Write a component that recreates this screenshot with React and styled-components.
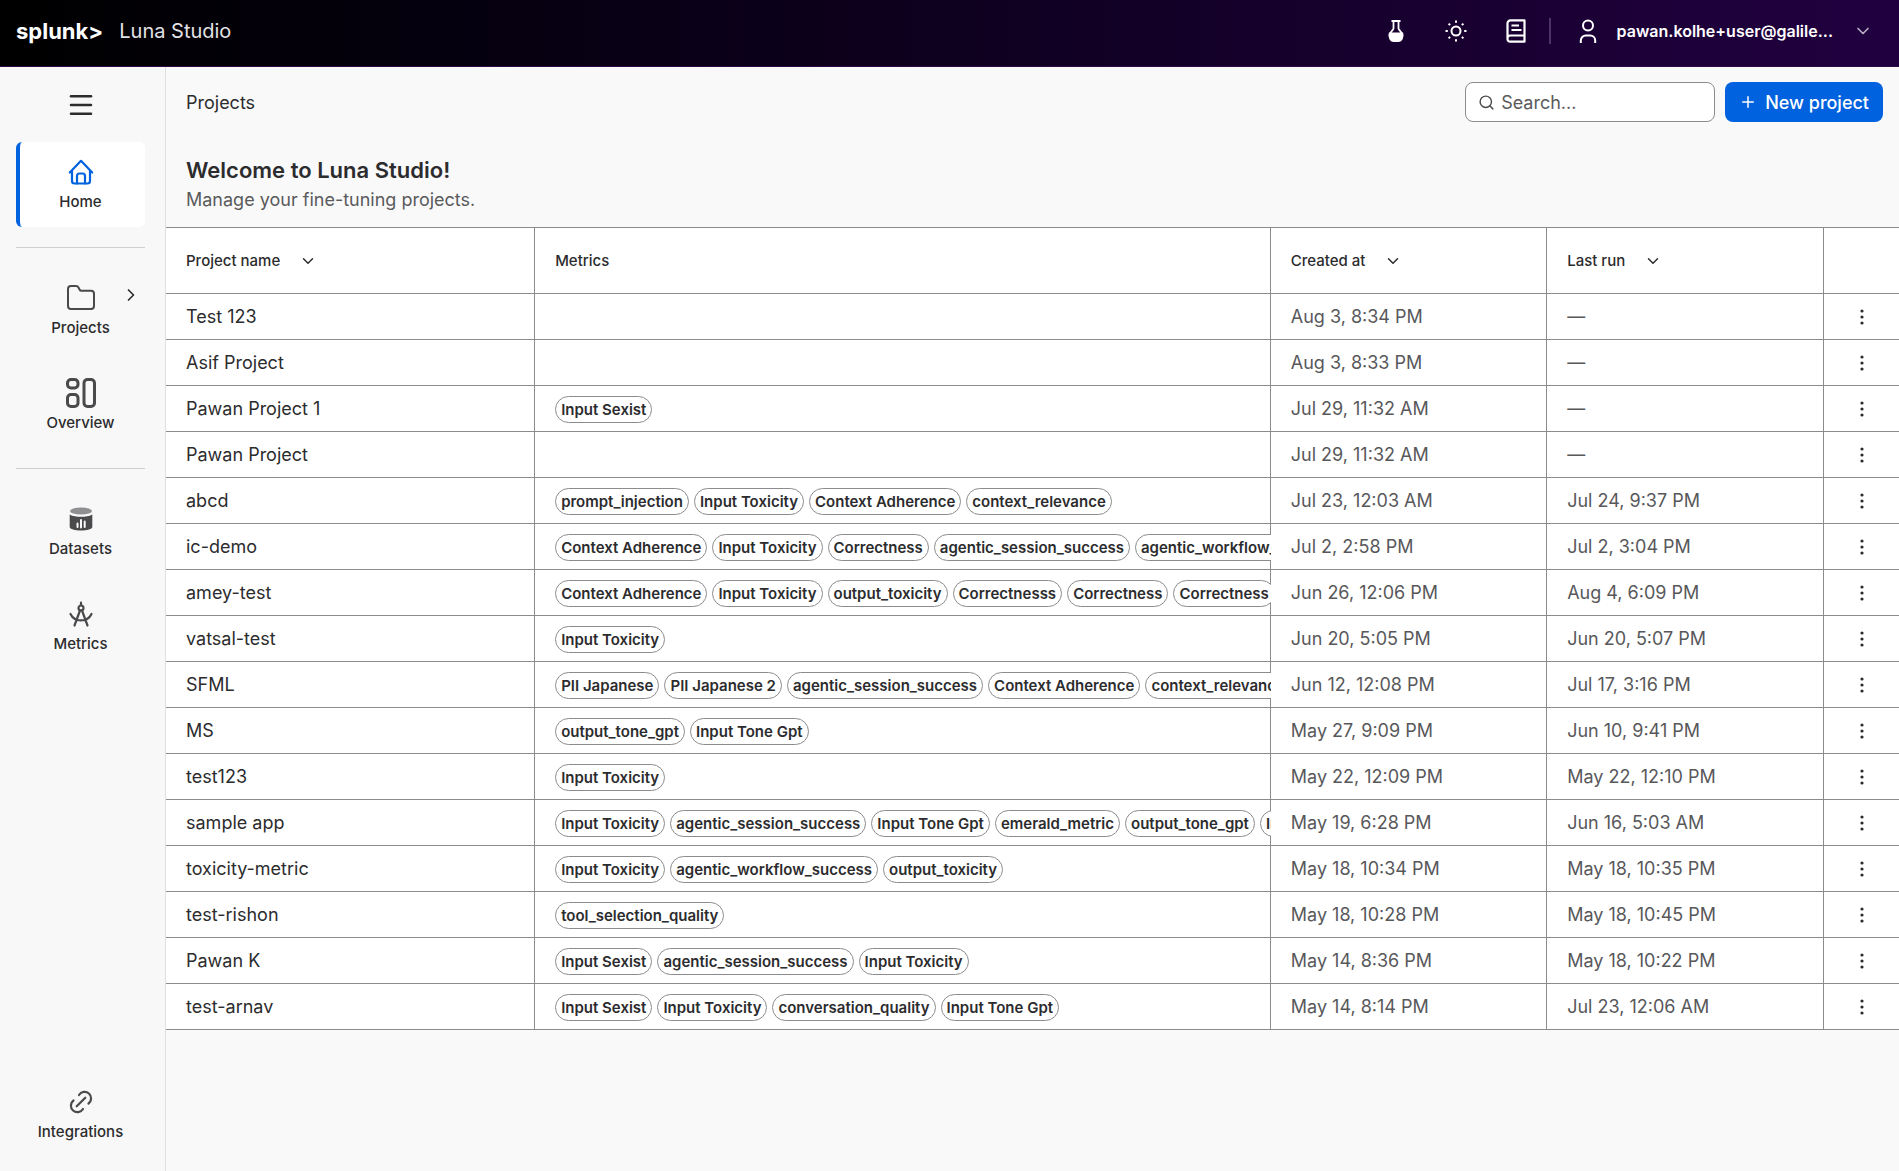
import styled, { createGlobalStyle } from "styled-components";
import { ChevronDown, ChevronRight, Menu, Plus, Search } from "lucide-react";

const GlobalStyle = createGlobalStyle`
    * {
        box-sizing: border-box;
    }

    body {
        margin: 0;
        background: #f9f9f9;
        color: #2c2c2e;
        font-family: Inter, "Liberation Sans", sans-serif;
        font-size: 18px;
    }

    button,
    input {
        font-family: inherit;
    }

    h1,
    h2,
    p,
    ul {
        margin: 0;
        padding: 0;
    }
`;

const Page = styled.div`
    min-height: 100vh;
    display: flex;
    flex-direction: column;
`;

const TopBar = styled.header`
    display: flex;
    align-items: center;
    justify-content: space-between;
    height: 67px;
    padding: 0 16px;
    background: linear-gradient(90deg, #000000 0%, #05000f 25%, #210040 100%);
    border-bottom: 1px solid #2f0a45;
    color: #ffffff;
`;

const Brand = styled.a`
    display: flex;
    align-items: center;
    gap: 16px;
    padding-bottom: 4px;
    color: #e2e2e6;
    font-size: 20px;
    line-height: 28px;
    text-decoration: none;

    strong {
        color: #ffffff;
        font-size: 22px;
        font-weight: 700;
    }
`;

const TopActions = styled.div`
    display: flex;
    align-items: center;
    padding-bottom: 4px;
`;

const IconButton = styled.button`
    display: grid;
    place-items: center;
    width: 60px;
    height: 40px;
    padding: 0;
    border: 0;
    background: none;
    color: inherit;
`;

const Separator = styled.span`
    width: 2px;
    height: 26px;
    margin-left: 3px;
    background: #4b3366;
`;

const UserButton = styled.button`
    display: flex;
    align-items: center;
    padding: 0 10px 0 28px;
    border: 0;
    background: none;
    color: #ffffff;
    font-size: 16px;
    font-weight: 600;
    line-height: 24px;

    span {
        margin: 0 20px;
    }
`;

const Body = styled.div`
    flex: 1;
    display: flex;
`;

const Sidebar = styled.nav`
    display: flex;
    flex-direction: column;
    flex: none;
    width: 166px;
    padding: 16px 20px 14px 16px;
    border-right: 1px solid #e0e0e0;
    background: #f8f8f8;
`;

const MenuButton = styled.button`
    align-self: center;
    display: grid;
    place-items: center;
    width: 44px;
    height: 44px;
    margin-bottom: 15px;
    padding: 0;
    border: 0;
    background: none;
    color: #2c2c2e;
`;

const NavGroup = styled.ul`
    display: flex;
    flex-direction: column;
    gap: 10px;
    list-style: none;

    &:last-child {
        margin-top: auto;
    }
`;

const NavDivider = styled.hr`
    width: 100%;
    height: 1px;
    margin: 20px 0;
    border: 0;
    background: #d0d0d4;
`;

const NavLink = styled.a`
    position: relative;
    display: flex;
    flex-direction: column;
    align-items: center;
    height: 85px;
    padding-top: 14px;
    padding-right: ${(props) => (props.$active ? "4px" : "0")};
    border-left: ${(props) => (props.$active ? "4px solid #0062de" : "0")};
    border-radius: 6px;
    background: ${(props) => (props.$active ? "#ffffff" : "transparent")};
    color: #2c2c2e;
    font-size: 15px;
    font-weight: 500;
    line-height: 22px;
    text-decoration: none;

    .nav__icon {
        display: grid;
        place-items: center;
        width: 32px;
        height: 32px;
        margin-bottom: 3px;
        color: ${(props) => (props.$active ? "#0062de" : "#4a4a4c")};
    }

    .nav__chevron {
        position: absolute;
        top: 17px;
        right: 4px;
    }
`;

const Main = styled.main`
    flex: 1;
    min-width: 0;
`;

const Toolbar = styled.div`
    display: flex;
    align-items: center;
    gap: 10px;
    padding: 15px 16px 0 20px;

    h2 {
        flex: 1;
        font-size: 18px;
        font-weight: 400;
    }
`;

const SearchBox = styled.label`
    display: flex;
    align-items: center;
    gap: 6px;
    width: 250px;
    height: 40px;
    padding: 0 12px;
    border: 1px solid #8c8c8f;
    border-radius: 8px;
    background: #ffffff;
    color: #4a4a4c;

    input {
        flex: 1;
        min-width: 0;
        padding: 0;
        border: 0;
        outline: 0;
        background: none;
        font-size: 18px;
    }

    input::placeholder {
        color: #5a5a5c;
    }
`;

const PrimaryButton = styled.button`
    display: flex;
    align-items: center;
    gap: 8px;
    height: 40px;
    padding: 0 14px;
    border: 0;
    border-radius: 8px;
    background: #0062de;
    color: #ffffff;
    font-size: 18px;
    font-weight: 500;
`;

const Intro = styled.section`
    padding: 33px 20px 13px;

    h1 {
        font-size: 22px;
        font-weight: 600;
        line-height: 30px;
    }

    p {
        padding-top: 1px;
        color: #5a5a5c;
        font-size: 18px;
        line-height: 28px;
    }
`;

const Table = styled.table`
    width: 100%;
    table-layout: fixed;
    border-spacing: 0;
    border-top: 1px solid #8c8c8f;
    background: #ffffff;
    text-align: left;
`;

const HeadCell = styled.th`
    width: ${(props) => props.$width};
    height: 66px;
    padding: 0 20px;
    border-right: 1px solid #8c8c8f;
    border-bottom: 1px solid #8c8c8f;
    font-size: 15px;
    font-weight: 500;

    &:last-child {
        border-right: 0;
    }
`;

const SortButton = styled.button`
    display: flex;
    align-items: center;
    gap: 19px;
    padding: 0;
    border: 0;
    background: none;
    color: inherit;
    font-size: inherit;
    font-weight: inherit;
`;

const Cell = styled.td`
    height: 46px;
    padding: 1px 20px 0;
    border-right: 1px solid #8c8c8f;
    border-bottom: 1px solid #8c8c8f;
    color: ${(props) => (props.$muted ? "#58585b" : "#2c2c2e")};
    font-size: 18px;
    line-height: 24px;
    white-space: nowrap;

    &:last-child {
        padding: 0 0 0 2px;
        border-right: 0;
    }
`;

/* The chips run over the cell's right border and are cut there. */
const Chips = styled.div`
    display: flex;
    gap: 5px;
    margin-right: -21px;
    overflow: hidden;
`;

const Chip = styled.span`
    flex: none;
    padding: 0 5px;
    border: 1px solid #8c8c8f;
    border-radius: 14px;
    background: #ffffff;
    color: #2c2c2e;
    font-size: 15px;
    font-weight: 600;
    line-height: 25px;
`;

const RowMenu = styled(IconButton)`
    width: 100%;
    color: #2c2c2e;
`;

function FlaskIcon() {
    return (
        <svg width="16" height="22" viewBox="0 0 16 22" fill="none">
            <path
                d="M3.5 1h9M5.500 1v7.500c0 1.500-4 3.500-4 7M10.500 1v7.500c0 1.500 4 3.500 4 7"
                stroke="currentColor"
                strokeWidth="1.800"
            />
            <path
                d="M1 12.500h14c1.300 4-.5 9.500-4.500 9.500h-5C1.500 22-.3 16.500 1 12.500z"
                fill="currentColor"
            />
        </svg>
    );
}

function SunIcon() {
    return (
        <svg
            width="22"
            height="22"
            viewBox="0 0 22 22"
            fill="none"
            stroke="currentColor"
            strokeWidth="2"
        >
            <circle cx="11" cy="11" r="4.500" />
            <path d="M11 .5v2.300M11 19.200v2.300M.5 11h2.300M19.200 11h2.300M3.600 3.600l1.500 1.500M16.900 16.900l1.500 1.500M3.600 18.400l1.500-1.500M16.900 5.100l1.500-1.500" />
        </svg>
    );
}

function BookIcon() {
    return (
        <svg
            width="20"
            height="24"
            viewBox="0 0 20 24"
            fill="none"
            stroke="currentColor"
            strokeWidth="2.200"
            strokeLinejoin="round"
        >
            <path d="M18.500 16.500V1.300H4.500a3 3 0 0 0-3 3V20a2.700 2.700 0 0 0 2.700 2.700h14.300v-6.200H4.200a2.700 2.700 0 0 0-2.700 2.700" />
            <path d="M5.500 6.500h7.500M5.500 11h10" />
        </svg>
    );
}

function UserIcon() {
    return (
        <svg
            width="18"
            height="26"
            viewBox="0 0 18 26"
            fill="none"
            stroke="currentColor"
            strokeWidth="2"
        >
            <circle cx="9" cy="7.500" r="5" />
            <path d="M1.800 25v-2.500a5 5 0 0 1 5-5h4.400a5 5 0 0 1 5 5V25" />
        </svg>
    );
}

function HomeIcon() {
    return (
        <svg
            width="26"
            height="26"
            viewBox="0 0 26 26"
            fill="none"
            stroke="currentColor"
            strokeWidth="2.200"
            strokeLinecap="round"
            strokeLinejoin="round"
        >
            <path d="M1.800 13.500 13 1.800l11.200 11.700M4 11.500V22a2.500 2.500 0 0 0 2.500 2.500h13A2.500 2.500 0 0 0 22 22V11.500" />
            <path d="M9 24.500V17a2.500 2.500 0 0 1 2.500-2.500h3A2.500 2.500 0 0 1 17 17v7.500" />
        </svg>
    );
}

function FolderIcon() {
    return (
        <svg
            width="28"
            height="26"
            viewBox="0 0 28 26"
            fill="none"
            stroke="currentColor"
            strokeWidth="2"
            strokeLinejoin="round"
        >
            <path d="M1 4a3 3 0 0 1 3-3h5c1.500 0 2 .5 2.600 1.700L12.500 4.500c.5 1 1 1.300 2 1.300H24a3 3 0 0 1 3 3V21a3 3 0 0 1-3 3H4a3 3 0 0 1-3-3z" />
        </svg>
    );
}

function OverviewIcon() {
    return (
        <svg
            width="30"
            height="30"
            viewBox="0 0 30 30"
            fill="none"
            stroke="currentColor"
            strokeWidth="3"
        >
            <rect x="1.500" y="1.500" width="10.500" height="8.500" rx="3.500" />
            <rect x="1.500" y="16.500" width="10.500" height="12" rx="3.500" />
            <rect x="18" y="1.500" width="10.500" height="27" rx="3.500" />
        </svg>
    );
}

function DatasetsIcon() {
    return (
        <svg width="24" height="24" viewBox="0 0 24 24" fill="currentColor">
            <ellipse cx="12" cy="4" rx="11" ry="3.600" opacity="0.6" />
            <path d="M.7 7.500c3 2 7 2.200 11.300 2.200s8.300-.2 11.300-2.200V20c0 2-5.300 3.500-11.300 3.500S.7 22 .7 20z" />
            <path
                d="M8.500 16.500V20M12 13v7.500M15.700 14.500V20"
                stroke="#f8f8f8"
                strokeWidth="2"
                strokeLinecap="round"
            />
        </svg>
    );
}

function MetricsIcon() {
    return (
        <svg
            width="24"
            height="26"
            viewBox="0 0 24 26"
            fill="none"
            stroke="currentColor"
            strokeWidth="2.200"
            strokeLinecap="round"
        >
            <circle cx="12" cy="7" r="2.500" />
            <path d="M12 1.500v3M11 9.500 5.500 24.500M13 9.500l5.500 15M1.500 13c4 8.500 17 8.500 21 0" />
        </svg>
    );
}

function LinkIcon() {
    return (
        <svg
            width="24"
            height="24"
            viewBox="0 0 24 24"
            fill="none"
            stroke="currentColor"
            strokeWidth="2.200"
            strokeLinecap="round"
        >
            <path d="M10 5A6.500 6.500 0 1 1 19.500 13.500M14 19A6.500 6.500 0 1 1 4.500 10.500M7.700 16.300l8.600-8.600" />
        </svg>
    );
}

function DotsIcon() {
    return (
        <svg width="4" height="18" viewBox="0 0 4 18" fill="currentColor">
            <circle cx="2" cy="3" r="1.600" />
            <circle cx="2" cy="9" r="1.600" />
            <circle cx="2" cy="15" r="1.600" />
        </svg>
    );
}

const columns = [
    { label: "Project name", width: "21.3%", sortable: true },
    { label: "Metrics", width: "42.45%" },
    { label: "Created at", width: "15.95%", sortable: true },
    { label: "Last run", width: "15.95%", sortable: true },
];

const projects = [
    { name: "Test 123", metrics: [], created: "Aug 3, 8:34 PM", lastRun: "—" },
    {
        name: "Asif Project",
        metrics: [],
        created: "Aug 3, 8:33 PM",
        lastRun: "—",
    },
    {
        name: "Pawan Project 1",
        metrics: ["Input Sexist"],
        created: "Jul 29, 11:32 AM",
        lastRun: "—",
    },
    {
        name: "Pawan Project",
        metrics: [],
        created: "Jul 29, 11:32 AM",
        lastRun: "—",
    },
    {
        name: "abcd",
        metrics: [
            "prompt_injection",
            "Input Toxicity",
            "Context Adherence",
            "context_relevance",
        ],
        created: "Jul 23, 12:03 AM",
        lastRun: "Jul 24, 9:37 PM",
    },
    {
        name: "ic-demo",
        metrics: [
            "Context Adherence",
            "Input Toxicity",
            "Correctness",
            "agentic_session_success",
            "agentic_workflow_success",
        ],
        created: "Jul 2, 2:58 PM",
        lastRun: "Jul 2, 3:04 PM",
    },
    {
        name: "amey-test",
        metrics: [
            "Context Adherence",
            "Input Toxicity",
            "output_toxicity",
            "Correctnesss",
            "Correctness",
            "Correctness",
        ],
        created: "Jun 26, 12:06 PM",
        lastRun: "Aug 4, 6:09 PM",
    },
    {
        name: "vatsal-test",
        metrics: ["Input Toxicity"],
        created: "Jun 20, 5:05 PM",
        lastRun: "Jun 20, 5:07 PM",
    },
    {
        name: "SFML",
        metrics: [
            "PII Japanese",
            "PII Japanese 2",
            "agentic_session_success",
            "Context Adherence",
            "context_relevance",
        ],
        created: "Jun 12, 12:08 PM",
        lastRun: "Jul 17, 3:16 PM",
    },
    {
        name: "MS",
        metrics: ["output_tone_gpt", "Input Tone Gpt"],
        created: "May 27, 9:09 PM",
        lastRun: "Jun 10, 9:41 PM",
    },
    {
        name: "test123",
        metrics: ["Input Toxicity"],
        created: "May 22, 12:09 PM",
        lastRun: "May 22, 12:10 PM",
    },
    {
        name: "sample app",
        metrics: [
            "Input Toxicity",
            "agentic_session_success",
            "Input Tone Gpt",
            "emerald_metric",
            "output_tone_gpt",
            "Input Sexist",
        ],
        created: "May 19, 6:28 PM",
        lastRun: "Jun 16, 5:03 AM",
    },
    {
        name: "toxicity-metric",
        metrics: [
            "Input Toxicity",
            "agentic_workflow_success",
            "output_toxicity",
        ],
        created: "May 18, 10:34 PM",
        lastRun: "May 18, 10:35 PM",
    },
    {
        name: "test-rishon",
        metrics: ["tool_selection_quality"],
        created: "May 18, 10:28 PM",
        lastRun: "May 18, 10:45 PM",
    },
    {
        name: "Pawan K",
        metrics: ["Input Sexist", "agentic_session_success", "Input Toxicity"],
        created: "May 14, 8:36 PM",
        lastRun: "May 18, 10:22 PM",
    },
    {
        name: "test-arnav",
        metrics: [
            "Input Sexist",
            "Input Toxicity",
            "conversation_quality",
            "Input Tone Gpt",
        ],
        created: "May 14, 8:14 PM",
        lastRun: "Jul 23, 12:06 AM",
    },
];

function NavItem({ icon, label, active, expandable }) {
    return (
        <li>
            <NavLink
                href="#"
                $active={active}
                aria-current={active ? "page" : undefined}
            >
                <span className="nav__icon">{icon}</span>
                {label}
                {expandable && (
                    <ChevronRight className="nav__chevron" size={20} />
                )}
            </NavLink>
        </li>
    );
}

function ProjectsTable() {
    return (
        <Table>
            <thead>
                <tr>
                    {columns.map((column) => (
                        <HeadCell
                            key={column.label}
                            $width={column.width}
                            scope="col"
                        >
                            {column.sortable ? (
                                <SortButton type="button">
                                    {column.label}
                                    <ChevronDown size={18} />
                                </SortButton>
                            ) : (
                                column.label
                            )}
                        </HeadCell>
                    ))}
                    <HeadCell aria-label="Actions" />
                </tr>
            </thead>
            <tbody>
                {projects.map((project) => (
                    <tr key={project.name}>
                        <Cell>{project.name}</Cell>
                        <Cell>
                            <Chips>
                                {project.metrics.map((metric, index) => (
                                    <Chip key={index}>{metric}</Chip>
                                ))}
                            </Chips>
                        </Cell>
                        <Cell $muted>{project.created}</Cell>
                        <Cell $muted>{project.lastRun}</Cell>
                        <Cell>
                            <RowMenu
                                type="button"
                                aria-label={`Actions for ${project.name}`}
                            >
                                <DotsIcon />
                            </RowMenu>
                        </Cell>
                    </tr>
                ))}
            </tbody>
        </Table>
    );
}

function App() {
    return (
        <Page>
            <GlobalStyle />
            <TopBar>
                <Brand href="#">
                    <strong>splunk&gt;</strong>
                    Luna Studio
                </Brand>
                <TopActions>
                    <IconButton type="button" aria-label="Experiments">
                        <FlaskIcon />
                    </IconButton>
                    <IconButton type="button" aria-label="Theme">
                        <SunIcon />
                    </IconButton>
                    <IconButton type="button" aria-label="Documentation">
                        <BookIcon />
                    </IconButton>
                    <Separator />
                    <UserButton type="button">
                        <UserIcon />
                        <span>pawan.kolhe+user@galile...</span>
                        <ChevronDown size={20} color="#b9aec6" />
                    </UserButton>
                </TopActions>
            </TopBar>
            <Body>
                <Sidebar aria-label="Main">
                    <MenuButton type="button" aria-label="Toggle menu">
                        <Menu size={30} strokeWidth={2} />
                    </MenuButton>
                    <NavGroup>
                        <NavItem icon={<HomeIcon />} label="Home" active />
                    </NavGroup>
                    <NavDivider />
                    <NavGroup>
                        <NavItem
                            icon={<FolderIcon />}
                            label="Projects"
                            expandable
                        />
                        <NavItem icon={<OverviewIcon />} label="Overview" />
                    </NavGroup>
                    <NavDivider />
                    <NavGroup>
                        <NavItem icon={<DatasetsIcon />} label="Datasets" />
                        <NavItem icon={<MetricsIcon />} label="Metrics" />
                    </NavGroup>
                    <NavGroup>
                        <NavItem icon={<LinkIcon />} label="Integrations" />
                    </NavGroup>
                </Sidebar>
                <Main>
                    <Toolbar>
                        <h2>Projects</h2>
                        <SearchBox>
                            <Search size={17} />
                            <input
                                type="text"
                                placeholder="Search..."
                                aria-label="Search projects"
                            />
                        </SearchBox>
                        <PrimaryButton type="button">
                            <Plus size={18} />
                            New project
                        </PrimaryButton>
                    </Toolbar>
                    <Intro>
                        <h1>Welcome to Luna Studio!</h1>
                        <p>Manage your fine-tuning projects.</p>
                    </Intro>
                    <ProjectsTable />
                </Main>
            </Body>
        </Page>
    );
}

export default App;
